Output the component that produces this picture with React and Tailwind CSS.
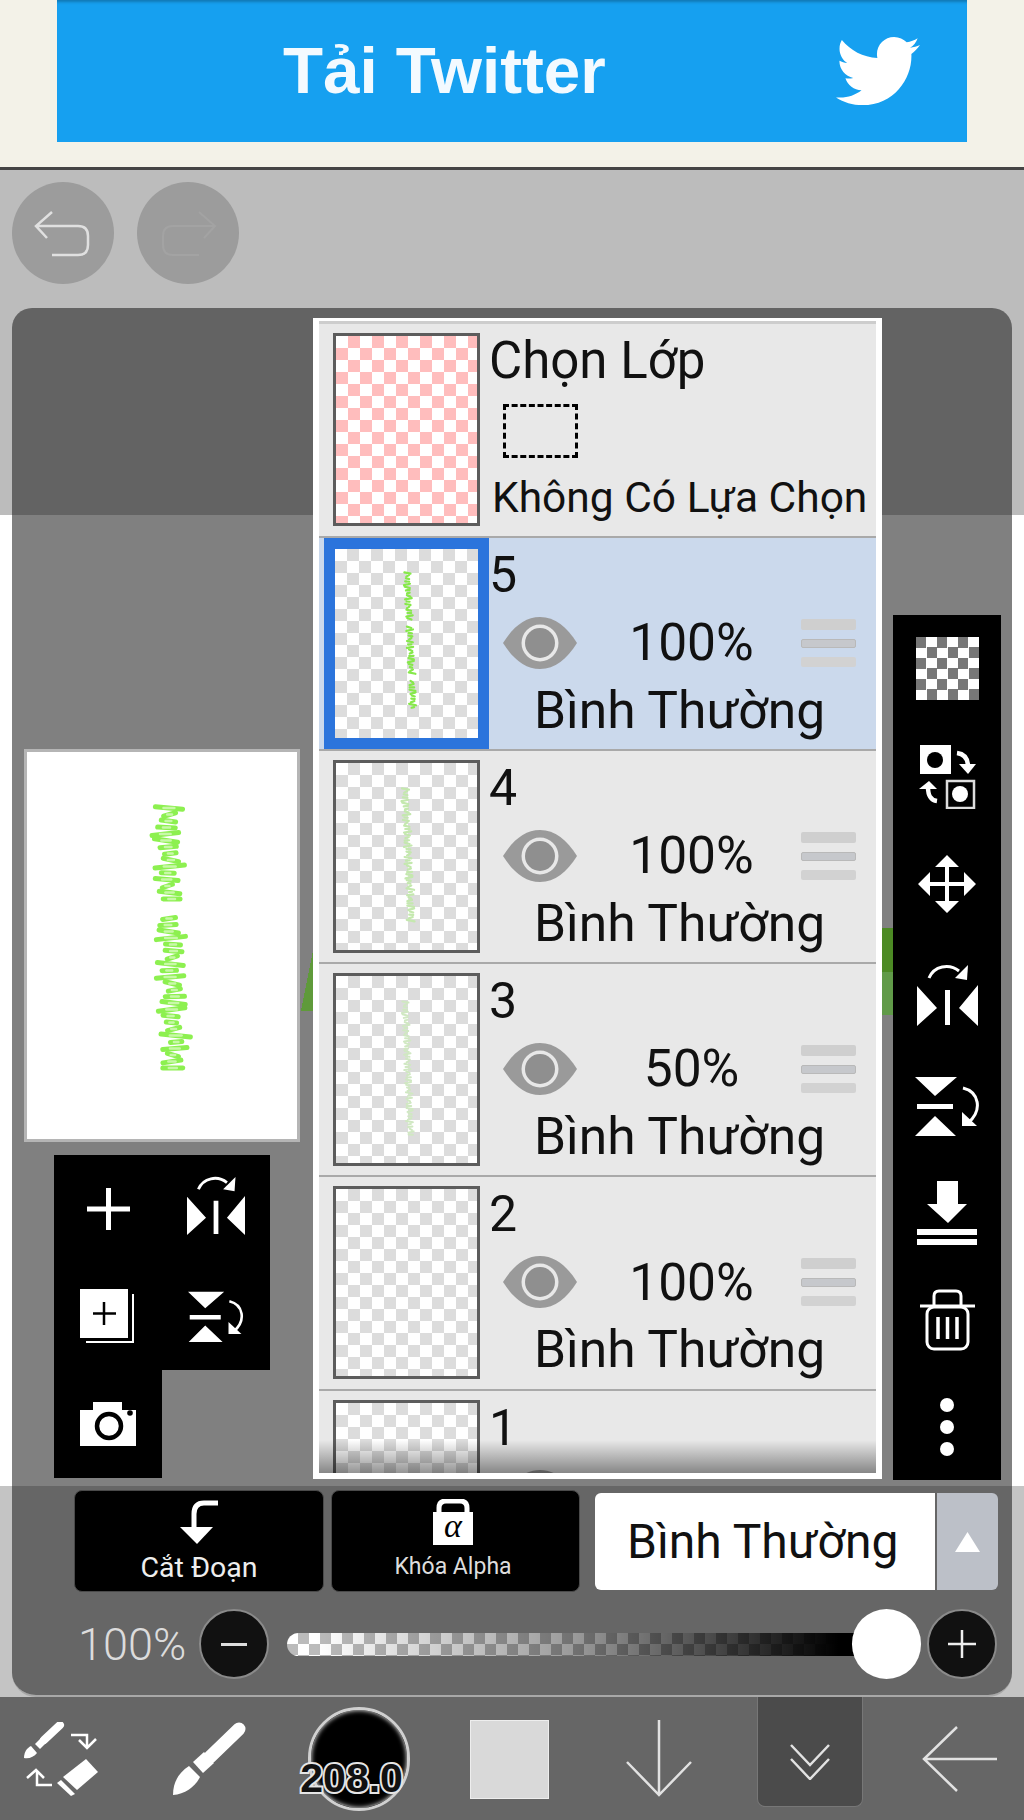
import React from "react";
import { FaTwitter } from "react-icons/fa";

function Scribble({ x, y0, y1, w, sw, color, drift = 0.2, gaps = [], opacity = 1, core }) {
  const strokes = [];
  let i = 0;
  for (let y = y0; y < y1; y += sw * 1.3) {
    i++;
    if (gaps.some(([a, b]) => y > a && y < b)) continue;
    const cx = x + ((y - y0) / (y1 - y0)) * w * drift + Math.sin(i * 0.9) * w * 0.08;
    const half = w * (0.16 + 0.34 * Math.abs(Math.sin(i * 1.7) * Math.cos(i * 0.6)));
    const tilt = Math.sin(i * 2.3) * sw * 0.35;
    strokes.push(<line key={i} x1={cx - half} y1={y - tilt} x2={cx + half} y2={y + tilt} stroke={color} strokeWidth={sw} strokeLinecap="round" opacity={opacity} />);
    if (core) strokes.push(<line key={"c" + i} x1={cx - half * 0.4} y1={y} x2={cx + half * 0.4} y2={y} stroke={core} strokeWidth={sw * 0.5} strokeLinecap="round" />);
  }
  return <svg className="w-full h-full block" xmlns="http://www.w3.org/2000/svg">{strokes}</svg>;
}

function Eye() {
  return (
    <svg width="74" height="52" viewBox="0 0 74 52" className="shrink-0">
      <path d="M0 26 C10 10 22 0 37 0 C52 0 64 10 74 26 C64 42 52 52 37 52 C22 52 10 42 0 26Z" fill="#9a9a9a" />
      <circle cx="37" cy="26" r="18.5" fill="#e8e8e8" />
      <circle cx="37" cy="26" r="15" fill="#8f8f8f" />
    </svg>
  );
}

function Handle() {
  return (
    <div className="w-[55px] flex flex-col gap-[9px] shrink-0">
      <div className="h-[11px] bg-[#cfcfcf] rounded-[2px]" />
      <div className="h-[9px] bg-[#c6c8cc] border border-[#b9b9b9] rounded-[2px]" />
      <div className="h-[10px] bg-[#d2d2d2] rounded-[2px]" />
    </div>
  );
}

function Layer({ n, pct, selected, art, partial }) {
  return (
    <div className={`h-[213.25px] shrink-0 flex border-b-2 border-[#a9a9a9] ${selected ? "bg-[#cbd9ec]" : "bg-[#e8e8e8]"}`}>
      {selected ? (
        <div className="ml-[5px] w-[165px] h-[211px] shrink-0 border-[11px] border-[#2b74dc] bg-white bg-[conic-gradient(#dcdcdc_25%,#fff_0_50%,#dcdcdc_0_75%,#fff_0)] bg-[size:24px_24px]">
          {art}
        </div>
      ) : (
        <div className="ml-[14px] mt-[9px] mr-[9px] w-[147px] h-[193px] shrink-0 border-[3px] border-[#5c5c5c] bg-white bg-[conic-gradient(#dcdcdc_25%,#fff_0_50%,#dcdcdc_0_75%,#fff_0)] bg-[size:24px_24px]">
          {art}
        </div>
      )}
      <div className="flex-1 flex flex-col text-[#111]">
        <div className="h-[74px] text-[50px] leading-[74px]">{n}</div>
        <div className="h-[62px] flex items-center pl-[14px] pr-[20px]">
          <Eye />
          {!partial && <div className="flex-1 text-center pl-[5px] text-[51.5px] leading-none">{pct}</div>}
          {!partial && <Handle />}
        </div>
        {!partial && <div className="h-[73px] pt-[1px] text-center pr-[6px] text-[51.5px] leading-[72px] whitespace-nowrap">Bình Thường</div>}
      </div>
    </div>
  );
}

const w = "#ffffff";

const FlipH = ({ width = 61 }) => (
  <svg width={width} viewBox="0 0 61 63">
    <path d="M0 23 L20 45 L0 63Z M61 22 L42 45 L61 63Z M28 27 H33 V62 H28Z" fill={w} />
    <path d="M12 15 C17 3 32 0 42 8" fill="none" stroke={w} strokeWidth="3" />
    <path d="M51 2 L50 17 L38 15Z" fill={w} />
  </svg>
);
const FlipV = ({ width = 65 }) => (
  <svg width={width} viewBox="0 0 65 60">
    <path d="M0 1 H42 L20 20Z M0 60 H41 L20 40Z M2 28 H38 V33 H2Z" fill={w} />
    <path d="M48 12 C64 16 68 34 53 47" fill="none" stroke={w} strokeWidth="3" />
    <path d="M47 36 L47 50 L62 50Z" fill={w} />
  </svg>
);

const Swap = () => (
  <svg width="57" height="64" viewBox="0 0 57 64">
    <rect x="1" y="0" width="31" height="29" fill={w} />
    <circle cx="16" cy="15" r="8" fill="#000" />
    <rect x="28" y="36" width="27" height="27" fill="none" stroke="#ddd" strokeWidth="2.5" />
    <circle cx="41" cy="49" r="8" fill={w} />
    <path d="M38 8 C46 9 49 14 49 22" fill="none" stroke={w} strokeWidth="4.5" />
    <path d="M40 19 H57 L49 29Z" fill={w} />
    <path d="M18 56 C11 55 9 50 9 42" fill="none" stroke={w} strokeWidth="4.5" />
    <path d="M0 44 L10 36 L18 44Z" fill={w} />
  </svg>
);
const Move = () => (
  <svg width="58" height="58" viewBox="0 0 58 58">
    <path d="M27 8 H31 V50 H27Z M8 27 H50 V31 H8Z" fill={w} />
    <path d="M29 0 L41 12 H17Z M29 58 L41 46 H17Z M0 29 L12 17 V41Z M58 29 L46 17 V41Z" fill={w} />
  </svg>
);
const Merge = () => (
  <svg width="60" height="65" viewBox="0 0 60 65">
    <path d="M20 0 H41 V23 H50 L31 42 L10 23 H20Z" fill={w} />
    <rect x="0" y="48" width="60" height="6" fill={w} />
    <rect x="0" y="58" width="60" height="6" fill={w} />
  </svg>
);
const Trash = () => (
  <svg width="55" height="62" viewBox="0 0 55 62" fill="none" stroke={w} strokeWidth="3">
    <path d="M0 17 H55" />
    <path d="M14 16 V7 Q14 2 19 2 H36 Q41 2 41 7 V16" />
    <rect x="7" y="18" width="41" height="42" rx="7" />
    <path d="M18 28 V50 M27.5 28 V50 M37 28 V50" strokeWidth="3.5" />
  </svg>
);
const Dots = () => (
  <svg width="16" height="60" viewBox="0 0 16 60">
    <circle cx="8" cy="8" r="7" fill={w} />
    <circle cx="8" cy="30" r="7" fill={w} />
    <circle cx="8" cy="52" r="7" fill={w} />
  </svg>
);
const Plus = () => (
  <svg width="43" height="42" viewBox="0 0 43 42">
    <path d="M19 0 H24 V18.5 H43 V23.5 H24 V42 H19 V23.5 H0 V18.5 H19Z" fill={w} />
  </svg>
);
const CopyPlus = () => (
  <svg width="56" height="55" viewBox="0 0 56 55">
    <rect x="0" y="0" width="48" height="49" fill={w} />
    <path d="M53 5 V53 H6" fill="none" stroke={w} strokeWidth="2" />
    <path d="M24 13 V36 M13 24.5 H36" stroke="#000" strokeWidth="2.5" />
  </svg>
);
const Camera = () => (
  <svg width="56" height="44" viewBox="0 0 56 44">
    <path d="M0 8 H13 V0 H42 V8 H56 V44 H0Z" fill={w} />
    <circle cx="29" cy="24" r="12" fill={w} stroke="#000" strokeWidth="4.5" />
    <circle cx="50" cy="11" r="2.8" fill="#000" />
  </svg>
);

const UndoGlyph = ({ color, flip, sw = 2.5 }) => (
  <svg width="102" height="102" viewBox="0 0 102 102" fill="none" stroke={color} strokeWidth={sw} className={flip ? "-scale-x-100" : ""}>
    <path d="M40 30 L24 44 L35 56 M24 44 H66 Q76 44 76 54 V63 Q76 73 66 73 H40" />
  </svg>
);

const Tools = () => (
  <svg width="75" height="74" viewBox="0 0 75 74">
    <path d="M20 18 L36 3" stroke={w} strokeWidth="8" strokeLinecap="round" />
    <path d="M11 22 L16 27 L22 21 L17 16Z" fill={w} />
    <path d="M0 36 C0 30 3 26 7 24 L13 31 C10 35 5 37 0 36Z" fill={w} />
    <path d="M62 37 L74 50 L53 68 L39 55Z" fill={w} />
    <path d="M37 58 L51 72 L47 74 L33 61Z" fill={w} />
    <path d="M47 13 H63 V25 M55 18 L63 26 L72 17" fill="none" stroke={w} strokeWidth="2.5" />
    <path d="M28 63 H13 V50 M3 56 L12 48 L20 56" fill="none" stroke={w} strokeWidth="2.5" />
  </svg>
);
const Brush = () => (
  <svg width="75" height="75" viewBox="0 0 75 75">
    <path d="M66 8 L37 36" stroke={w} strokeWidth="13" strokeLinecap="round" />
    <path d="M20 41 L31 31 L41 42 L30 52Z" fill={w} />
    <path d="M0 74 C0 62 5 52 16 45 L27 56 C22 66 12 73 0 74Z" fill={w} />
  </svg>
);

export default function App() {
  return (
    <div className="w-[1024px] h-[1820px] flex flex-col overflow-hidden bg-[#666] font-[Roboto,sans-serif]">
      {/* ad banner */}
      <div className="h-[170px] shrink-0 bg-[#f3f2e8] border-b-[3px] border-[#444] px-[57px]">
        <div className="h-[142px] bg-[#16a0f0] shadow-[inset_0_4px_3px_-2px_rgba(0,0,0,0.25)] flex items-center pl-[226px] pr-[47px] justify-between">
          <span className="font-['Liberation_Sans',sans-serif] font-bold text-[65.5px] leading-none text-white/95 whitespace-nowrap">Tải Twitter</span>
          <FaTwitter className="text-white w-[84px] h-[84px]" />
        </div>
      </div>

      {/* stage */}
      <div className="h-[1527px] shrink-0 flex flex-col bg-[linear-gradient(#bcbcbc_0,#bcbcbc_345px,#fff_345px,#fff_1316px,#c4c4c4_1316px)]">
        <div className="h-[138px] shrink-0 pl-[12px] pt-[12px] flex gap-[23px]">
          <div className="w-[102px] h-[102px] rounded-full bg-[#9c9c9c]"><UndoGlyph color="#e0e0e0" /></div>
          <div className="w-[102px] h-[102px] rounded-full bg-[#9c9c9c]"><UndoGlyph color="#a3a3a3" flip sw={2} /></div>
        </div>

        <div className="mx-3 flex-1 flex flex-col rounded-t-[20px] rounded-b-[24px] overflow-hidden border-b-2 border-[#a8a8a8]">
          {/* content row */}
          <div className="relative h-[1178px] shrink-0 flex bg-[linear-gradient(#636363_0,#636363_207px,#808080_207px)]">
            <div className="w-[301px] shrink-0 flex flex-col justify-end pb-[8px]">
              <div className="ml-[12px] w-[276px] h-[393px] bg-white border-[3px] border-[#b5b5b5]">
                <Scribble x={140} y0={56} y1={322} w={31} sw={5} drift={0.25} color="#8df050" core="#c8f8a8" gaps={[[152, 162], [258, 264]]} />
              </div>
              <div className="mt-[13px] ml-[42px] w-[216px] h-[323px] grid grid-cols-2 grid-rows-3">
                <div className="bg-black flex items-center justify-center"><Plus /></div>
                <div className="bg-black flex items-center justify-center pb-[8px]"><FlipH width={58} /></div>
                <div className="bg-black flex items-center justify-center"><CopyPlus /></div>
                <div className="bg-black flex items-center justify-center"><FlipV width={56} /></div>
                <div className="bg-black flex items-center justify-center"><Camera /></div>
              </div>
            </div>

            {/* layer list */}
            <div className="relative mt-[10px] w-[569px] h-[1161px] shrink-0 border-x-[6px] border-t-[3px] border-b-[6px] border-white bg-[#e8e8e8] overflow-hidden flex flex-col">
              <div className="h-[216.5px] shrink-0 flex border-t-[3px] border-b-2 border-t-[#cdcdcd] border-b-[#a9a9a9]">
                <div className="ml-[14px] mt-[9px] mr-[9px] w-[147px] h-[193px] shrink-0 border-[3px] border-[#5c5c5c] bg-white bg-[conic-gradient(#ffbdbd_25%,#fff_0_50%,#ffbdbd_0_75%,#fff_0)] bg-[size:24px_24px]" />
                <div className="flex-1 flex flex-col text-[#111]">
                  <div className="h-[74px] text-[51px] leading-[74px] whitespace-nowrap">Chọn Lớp</div>
                  <div className="h-[66px] pl-[14px] flex items-center">
                    <div className="w-[75px] h-[54px] border-[3px] border-dashed border-black" />
                  </div>
                  <div className="h-[66px] pl-[3px] pt-[2px] text-[42.5px] leading-[64px] whitespace-nowrap">Không Có Lựa Chọn</div>
                </div>
              </div>
              <Layer n="5" pct="100%" selected art={<Scribble x={72} y0={24} y1={160} w={7} sw={2.2} drift={0.9} color="#86e84a" gaps={[[70, 76], [126, 130]]} />} />
              <Layer n="4" pct="100%" art={<Scribble x={69} y0={26} y1={160} w={8} sw={2.2} drift={0.8} color="#c4e8ae" />} />
              <Layer n="3" pct="50%" art={<Scribble x={69} y0={26} y1={160} w={7} sw={2} drift={0.8} color="#d0e8c2" />} />
              <Layer n="2" pct="100%" />
              <Layer n="1" partial />
              <div className="absolute left-0 right-0 bottom-0 h-[33px] bg-[linear-gradient(rgba(0,0,0,0),rgba(0,0,0,0.42))]" />
            </div>

            {/* right toolbar */}
            <div className="ml-[11px] mt-[307px] w-[108px] h-[865px] shrink-0 bg-black flex flex-col">
              <div className="flex-1 flex items-center justify-center pb-[2px]">
                <div className="w-[63px] h-[63px] bg-[conic-gradient(#fff_25%,#777_0_50%,#fff_0_75%,#777_0)] bg-[size:21px_21px]" />
              </div>
              <div className="flex-1 flex items-center justify-center"><Swap /></div>
              <div className="flex-1 flex items-center justify-center pb-[4px]"><Move /></div>
              <div className="flex-1 flex items-center justify-center pb-[5px]"><FlipH /></div>
              <div className="flex-1 flex items-center justify-center"><FlipV /></div>
              <div className="flex-1 flex items-center justify-center"><Merge /></div>
              <div className="flex-1 flex items-center justify-center"><Trash /></div>
              <div className="flex-1 flex items-center justify-center"><Dots /></div>
            </div>

            {/* canvas showing behind the panels */}
            <div className="absolute left-[289px] top-[642px] w-[12px] h-[61px] bg-[linear-gradient(to_top_left,#5f9a3a_50%,rgba(0,0,0,0)_50%)]" />
            <div className="absolute left-[870px] top-[620px] w-[11px] h-[44px] bg-[#4c8a24]" />
            <div className="absolute left-[870px] top-[664px] w-[11px] h-[43px] bg-[#609a48]" />
          </div>

          {/* bottom controls */}
          <div className="flex-1 bg-[#666] flex flex-col">
            <div className="h-[109px] shrink-0 pl-[62px] pt-[4px] flex items-start">
              <div className="w-[250px] h-[102px] rounded-lg bg-black border border-[#4a4a4a] flex flex-col items-center pt-[9px]">
                <svg width="38" height="44" viewBox="0 0 38 44">
                  <path d="M38 3 H24 Q14 3 14 14 V28" fill="none" stroke={w} strokeWidth="5" />
                  <path d="M0 27 H33 L17 44Z" fill={w} />
                </svg>
                <span className="mt-[10px] text-[28.5px] leading-[28px] text-[#eee] whitespace-nowrap">Cắt Đoạn</span>
              </div>
              <div className="ml-[7px] w-[249px] h-[102px] rounded-lg bg-black border border-[#4a4a4a] flex flex-col items-center pt-[8px] pr-[5px]">
                <svg width="40" height="46" viewBox="0 0 40 46">
                  <path d="M6 16 V9 Q6 2 13 2 H27 Q34 2 34 9 V16" fill="none" stroke={w} strokeWidth="5" />
                  <rect x="0" y="13" width="40" height="33" fill={w} />
                  <text x="20" y="38" textAnchor="middle" fontSize="34" fontStyle="italic" fontFamily="Liberation Serif, serif" fill="#000">α</text>
                </svg>
                <span className="mt-[10px] text-[23px] leading-[24px] text-[#ddd] whitespace-nowrap">Khóa Alpha</span>
              </div>
              <div className="ml-[15px] mt-[3px] w-[340px] h-[97px] rounded-l-md bg-white flex items-center pl-[32px] text-[48px] leading-none text-[#111] whitespace-nowrap">Bình Thường</div>
              <div className="ml-[2px] mt-[3px] w-[61px] h-[97px] rounded-r-md bg-[#bcc0c8] flex items-center justify-center">
                <svg width="25" height="20" viewBox="0 0 25 20"><path d="M12.5 0 L25 20 H0Z" fill={w} /></svg>
              </div>
            </div>

            <div className="flex-1 flex items-start pl-[66px] pt-[14px]">
              <div className="w-[121px] h-[70px] flex items-center text-[45px] font-light leading-none text-[#dcdcdc] whitespace-nowrap">100%</div>
              <div className="w-[70px] h-[70px] rounded-full bg-[#111] border-2 border-[#8a8a8a] flex items-center justify-center shrink-0">
                <div className="w-[26px] h-[3px] bg-[#ddd]" />
              </div>
              <div className="relative ml-[18px] w-[635px] h-[70px] flex items-center">
                <div className="w-[580px] h-[23px] rounded-l-full overflow-hidden bg-white bg-[conic-gradient(#bbb_25%,#fff_0_50%,#bbb_0_75%,#fff_0)] bg-[size:22px_22px]">
                  <div className="w-full h-full bg-[linear-gradient(to_right,rgba(0,0,0,0)_5%,rgba(0,0,0,0.4)_50%,#000_95%)]" />
                </div>
                <div className="absolute left-[565px] top-0 w-[69px] h-[70px] rounded-full bg-white" />
              </div>
              <div className="ml-[5px] w-[70px] h-[70px] rounded-full bg-[#111] border-2 border-[#8a8a8a] flex items-center justify-center shrink-0">
                <svg width="32" height="32" viewBox="0 0 32 32"><path d="M16 2 V30 M2 16 H30" stroke="#eee" strokeWidth="2.5" /></svg>
              </div>
            </div>
          </div>
        </div>
      </div>

      {/* bottom toolbar */}
      <div className="flex-1 bg-[#666] flex items-start">
        <div className="w-[124px] h-[123px] flex items-center justify-center"><Tools /></div>
        <div className="w-[172px] h-[123px] flex items-center justify-center pl-[2px]"><Brush /></div>
        <div className="relative w-[126px] h-[123px] flex items-center justify-center">
          <div className="w-[102px] h-[104px] rounded-full bg-black border-[3px] border-[#d0d0d0] shadow-[inset_0_0_5px_#fff]" />
          <span className="absolute left-0 right-[14px] top-[60px] text-center text-[41px] leading-[43px] font-bold font-['Liberation_Sans',sans-serif] text-[#111] [-webkit-text-stroke:4px_#e6e6e6] [paint-order:stroke_fill]">208.0</span>
        </div>
        <div className="w-[176px] h-[123px] flex items-center justify-center pt-[1px]">
          <div className="w-[79px] h-[79px] bg-[#d9d9d9] border border-[#eee]" />
        </div>
        <div className="w-[124px] h-[123px] flex items-center justify-center">
          <svg width="66" height="77" viewBox="0 0 66 77" fill="none" stroke="#e2e2e2" strokeWidth="2.5">
            <path d="M33 0 V75 M1 42 L33 75 L65 42" />
          </svg>
        </div>
        <div className="ml-[36px] w-[106px] h-[110px] rounded-b-lg bg-[#4b4b4b] border-x border-b border-[#777] flex items-center justify-center pt-[20px]">
          <svg width="42" height="36" viewBox="0 0 42 36" fill="none" stroke="#e2e2e2" strokeWidth="2.5">
            <path d="M2 1 L21 21 L40 1 M2 15 L21 35 L40 15" />
          </svg>
        </div>
        <div className="w-[161px] h-[123px] flex items-center pl-[59px]">
          <svg width="75" height="66" viewBox="0 0 75 66" fill="none" stroke="#e2e2e2" strokeWidth="2.5">
            <path d="M75 33 H2 M35 1 L2 33 L35 65" />
          </svg>
        </div>
      </div>
    </div>
  );
}
